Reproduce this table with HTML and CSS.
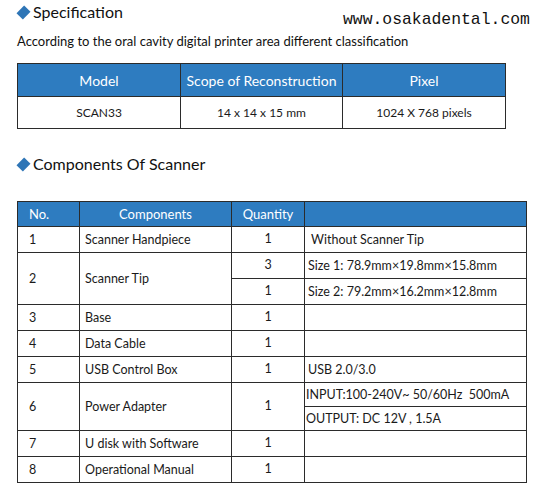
FILE: index.html
```html
<!DOCTYPE html>
<html>
<head>
<meta charset="utf-8">
<link rel="stylesheet" href="styles.css">
</head>
<body>
<div class="page">
  <div class="watermark">www.osakadental.com</div>
  <h2 class="heading"><span class="diamond"></span>Specification</h2>
  <p class="sub">According to the oral cavity digital printer area different classification</p>
  <table class="spec">
    <colgroup><col class="c1"><col class="c2"><col class="c3"></colgroup>
    <thead>
      <tr><th>Model</th><th>Scope of Reconstruction</th><th>Pixel</th></tr>
    </thead>
    <tbody>
      <tr><td>SCAN33</td><td>14 x 14 x 15 mm</td><td>1024 X 768 pixels</td></tr>
    </tbody>
  </table>

  <h2 class="heading h2b"><span class="diamond"></span>Components Of Scanner</h2>
  <table class="comp">
    <colgroup><col class="k1"><col class="k2"><col class="k3"><col class="k4"></colgroup>
    <thead>
      <tr><th class="left">No.</th><th>Components</th><th>Quantity</th><th></th></tr>
    </thead>
    <tbody>
      <tr><td>1</td><td>Scanner Handpiece</td><td class="q">1</td><td class="n">&nbsp;Without Scanner Tip</td></tr>
      <tr class="half"><td rowspan="2">2</td><td rowspan="2">Scanner Tip</td><td class="q">3</td><td class="n">Size 1: 78.9mm×19.8mm×15.8mm</td></tr>
      <tr class="half"><td class="q">1</td><td class="n">Size 2: 79.2mm×16.2mm×12.8mm</td></tr>
      <tr><td>3</td><td>Base</td><td class="q">1</td><td class="n"></td></tr>
      <tr><td>4</td><td>Data Cable</td><td class="q">1</td><td class="n"></td></tr>
      <tr><td>5</td><td>USB Control Box</td><td class="q">1</td><td class="n">USB 2.0/3.0</td></tr>
      <tr class="half"><td rowspan="2">6</td><td rowspan="2">Power Adapter</td><td rowspan="2" class="q">1</td><td class="n tight">INPUT:100-240V~ 50/60Hz&nbsp; 500mA</td></tr>
      <tr class="half"><td class="n tight">OUTPUT: DC 12V , 1.5A</td></tr>
      <tr><td>7</td><td>U disk with Software</td><td class="q">1</td><td class="n"></td></tr>
      <tr><td>8</td><td>Operational Manual</td><td class="q">1</td><td class="n"></td></tr>
    </tbody>
  </table>
</div>
</body>
</html>
```
FILE: styles.css
```css
html, body { margin: 0; padding: 0; background: #fff; }
.page {
  position: relative;
  width: 544px;
  height: 499px;
  padding: 2px 0 0 17px;
  box-sizing: border-box;
  font-family: Lato, "Liberation Sans", sans-serif;
  color: #1a1a1a;
}
.watermark {
  position: absolute;
  left: 343px;
  top: 10px;
  font-family: "Liberation Mono", monospace;
  font-size: 16.4px;
  color: #111;
  letter-spacing: 0;
}
.heading {
  margin: 0;
  font-size: 16px;
  font-weight: normal;
  line-height: 20px;
  height: 20px;
  display: flex;
  align-items: center;
  color: #111;
}
.diamond {
  display: inline-block;
  width: 9px;
  height: 9px;
  background: #2e75b6;
  transform: rotate(45deg) scaleY(1.2);
  margin: 0 5px 0 2px;
}
.sub {
  margin: 11px 0 0 0;
  font-size: 13px;
  line-height: 16px;
  color: #111;
}
table {
  border-collapse: collapse;
  table-layout: fixed;
}
th, td {
  border: 1px solid #2b2b2b;
  padding: 0;
  font-weight: normal;
}
th {
  background: #2e7cc0;
  color: #fff;
}
.spec {
  margin-top: 14px;
  width: 488px;
}
.spec .c1 { width: 163px; }
.spec .c2 { width: 162px; }
.spec .c3 { width: 163px; }
.spec th {
  height: 32px;
  font-size: 14px;
  text-align: center;
}
.spec td {
  height: 31px;
  font-size: 12px;
  text-align: center;
}
.h2b { margin-top: 25px; }
.comp {
  margin-top: 27px;
  width: 509px;
}
.comp .k1 { width: 62px; }
.comp .k2 { width: 152px; }
.comp .k3 { width: 73px; }
.comp .k4 { width: 222px; }
.comp th {
  height: 24px;
  font-size: 13px;
  text-align: center;
}
.comp th.left { text-align: left; padding-left: 11px; }
.comp td {
  height: 24px;
  font-size: 12.5px;
  padding-left: 5px;
  text-align: left;
  color: #1a1a1a;
}
.comp tbody td { height: 23px; }
.comp td:first-child { padding-left: 11px; }
.comp td.q { text-align: center; padding-left: 0; padding-bottom: 2px; }
.comp td.n { padding-left: 3px; }
.comp td.tight { padding-left: 1px; }
```
